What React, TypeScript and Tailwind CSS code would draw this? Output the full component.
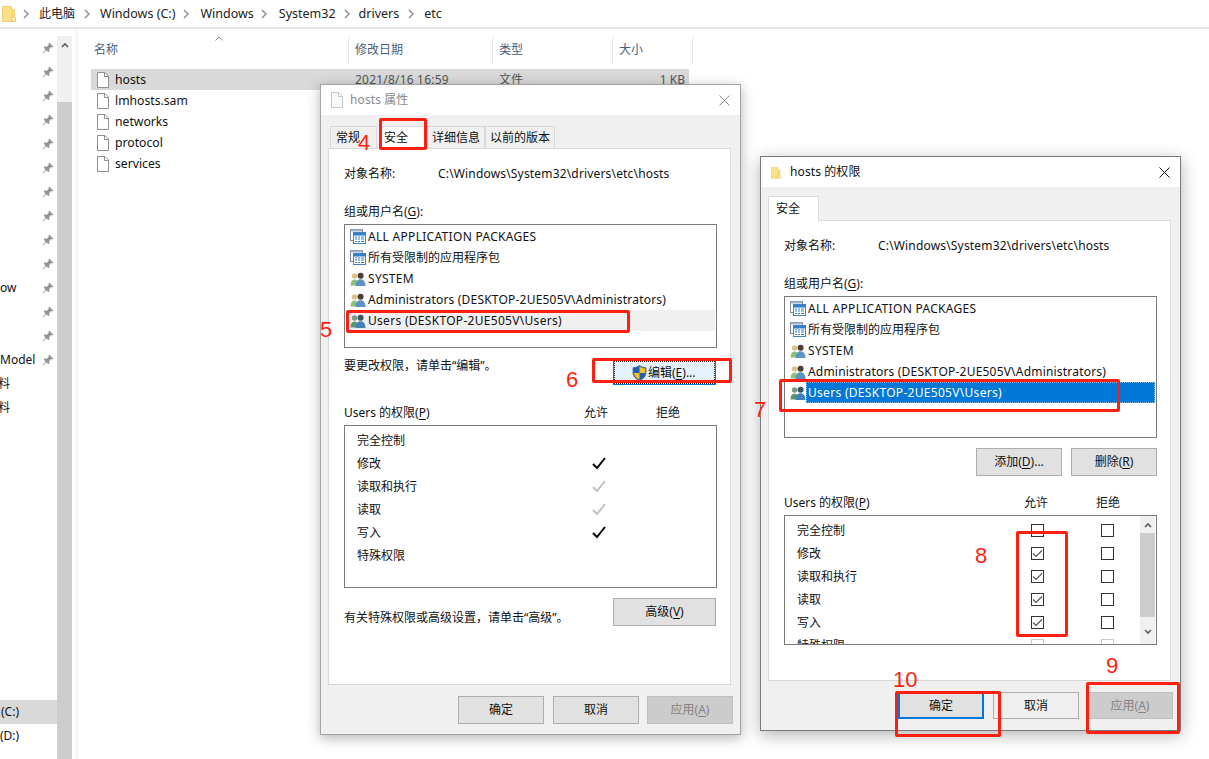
import React from "react";

const Chevron = () => (
  <svg width="6" height="10" viewBox="0 0 6 10" className="shrink-0">
    <path d="M1 1l4 4-4 4" fill="none" stroke="#8a8a8a" strokeWidth="1.4" />
  </svg>
);

const FolderIcon = ({ w = 14, h = 17 }: { w?: number; h?: number }) => (
  <svg width={w} height={h} viewBox="0 0 14 17" className="shrink-0">
    <path d="M0.5 1.5h8.5l1 2.5v12.5h-9.5z" fill="#fbe08c" stroke="#f2cf72" />
    <path d="M10 12.5h3.5v4h-3.5z" fill="#ffedb0" stroke="#f0c95f" />
    <path d="M10 4h3v9h-3z" fill="#f8d775" />
  </svg>
);

const FileIcon = ({ pale = false }: { pale?: boolean }) => (
  <svg width="12" height="16" viewBox="0 0 12 16" className="shrink-0">
    <path
      d="M0.5 0.5h7.5l3.5 3.5v11.5h-11z"
      fill={pale ? "#fafafa" : "#ffffff"}
      stroke={pale ? "#c9c9c9" : "#8f8f8f"}
    />
    <path d="M7.5 0.5v4h4" fill="none" stroke={pale ? "#c9c9c9" : "#8f8f8f"} />
  </svg>
);

const Pin = () => (
  <svg width="12" height="12" viewBox="0 0 12 12" className="shrink-0">
    <path d="M7.2 0.6l4.2 4.2-1.2 0.7-1-0.4-2 2 0.2 2.2-1 1-2-2L1 11.4l-0.4-0.4 3-3.4-2-2 1-1 2.2 0.2 2-2-0.3-1z" fill="#8d949b" />
  </svg>
);

const GroupIcon = ({ tint = false }: { tint?: boolean }) => (
  <svg width="16" height="16" viewBox="0 0 16 16" className="shrink-0">
    <circle cx="4.6" cy="5" r="2.8" fill={tint ? "#7f9a80" : "#d9c48c"} />
    <path d="M0.5 14.5c0-4 1.6-6 4-6s4 2 4 6z" fill={tint ? "#5f9468" : "#8fbf72"} />
    <circle cx="10.6" cy="4.8" r="3" fill={tint ? "#3c5566" : "#4b3f36"} />
    <path d="M5.5 15c0-4.4 2-6.8 5-6.8s5 2.4 5 6.8z" fill={tint ? "#3f82b8" : "#5d92c4"} />
  </svg>
);

const PackageIcon = () => (
  <svg width="16" height="15" viewBox="0 0 16 15" className="shrink-0">
    <rect x="0.5" y="0.5" width="12" height="11" fill="#ffffff" stroke="#7d8b9c" />
    <rect x="0.5" y="0.5" width="12" height="2" fill="#9fb4cc" />
    <rect x="3.5" y="3.5" width="12" height="11" fill="#ffffff" stroke="#4f7fb3" />
    <rect x="4" y="4" width="11" height="2.5" fill="#2f7fd0" />
    <path d="M5 8h2M8 8h2M11 8h3M5 10h2M8 10h2M11 10h3M5 12.5h2M8 12.5h2M11 12.5h3" stroke="#2f7fd0" strokeWidth="1.2" />
  </svg>
);

const Shield = () => (
  <svg width="15" height="16" viewBox="0 0 15 16" className="shrink-0">
    <path d="M7.5 0.5C5.5 2 3 2.6 1 2.6v5.2c0 3.6 3 6.4 6.5 7.7 3.5-1.3 6.5-4.1 6.5-7.7V2.6C12 2.6 9.5 2 7.5 0.5z" fill="#1f5fb8" stroke="#5c6d86" strokeWidth="0.8" />
    <path d="M7.5 1.4V8H1.8v-0.2V3.3C3.8 3.2 5.9 2.6 7.5 1.4z" fill="#1f5fb8" />
    <path d="M7.5 1.6c1.6 1.1 3.6 1.7 5.7 1.8V8H7.5z" fill="#f6c21c" />
    <path d="M1.9 8h5.6v6.6C4.8 13.5 2.2 11.2 1.9 8z" fill="#f6c21c" />
  </svg>
);

const CloseX = ({ color }: { color: string }) => (
  <svg width="11" height="11" viewBox="0 0 11 11" className="shrink-0">
    <path d="M0.5 0.5l10 10M10.5 0.5l-10 10" stroke={color} strokeWidth="1" />
  </svg>
);

const BigCheck = ({ color }: { color: string }) => (
  <svg width="14" height="13" viewBox="0 0 14 13" className="shrink-0">
    <path d="M1 7l4 4 8-10" fill="none" stroke={color} strokeWidth="2" />
  </svg>
);

const ScrollChevron = ({ down = false }: { down?: boolean }) => (
  <svg width="8" height="6" viewBox="0 0 8 6" className="shrink-0">
    <path d={down ? "M1 1l3 3 3-3" : "M1 5l3-3 3 3"} fill="none" stroke="#606060" strokeWidth="1.7" />
  </svg>
);

const CheckBox = ({ checked = false, faint = false }: { checked?: boolean; faint?: boolean }) => (
  <div
    className={`w-[13px] h-[13px] shrink-0 border flex items-center justify-center bg-white ${
      faint ? "border-[#cccccc]" : "border-[#333333]"
    }`}
  >
    {checked && (
      <svg width="11" height="9" viewBox="0 0 11 9">
        <path d="M1 4.5l3 3 6-6" fill="none" stroke="#555555" strokeWidth="1.2" />
      </svg>
    )}
  </div>
);

const BTN = "w-[86px] h-[28px] border border-[#adadad] bg-[#e1e1e1]";

const Button = ({ children, className = BTN }: { children: React.ReactNode; className?: string }) => (
  <div className={`flex items-center justify-center ${className}`}>{children}</div>
);

const U = ({ children }: { children: React.ReactNode }) => <span className="underline underline-offset-2">{children}</span>;

const PrincipalRows = ({ selected }: { selected: boolean }) => (
  <div className="flex flex-col pt-[1px] px-[1px]">
    {[
      { t: "ALL APPLICATION PACKAGES", icon: <PackageIcon />, c: "tracking-[0.3px]" },
      { t: "所有受限制的应用程序包", icon: <PackageIcon />, c: "" },
      { t: "SYSTEM", icon: <GroupIcon />, c: "tracking-[0.3px]" },
      { t: "Administrators (DESKTOP-2UE505V\\Administrators)", icon: <GroupIcon />, c: "tracking-[0.2px]" },
    ].map((r) => (
      <div key={r.t} className="h-[21px] flex items-center pl-[4px] gap-[2px]">
        {r.icon}
        <span className={r.c}>{r.t}</span>
      </div>
    ))}
    <div className={`h-[21px] flex items-center pl-[4px] ${selected ? "" : "bg-[#f0f0f0]"}`}>
      <GroupIcon tint />
      <span
        className={
          selected
            ? "flex-1 self-stretch flex items-center pl-[2px] tracking-[0.3px] bg-[#0078d7] text-white outline-1 outline-dotted outline-[#8ab8de] -outline-offset-1"
            : "pl-[2px] tracking-[0.3px]"
        }
      >
        Users (DESKTOP-2UE505V\Users)
      </span>
    </div>
  </div>
);

const PERMS = ["完全控制", "修改", "读取和执行", "读取", "写入", "特殊权限"];

const Dialog1Perms = () => {
  const marks: Record<number, string> = { 1: "#000000", 2: "#c2c2c2", 3: "#c2c2c2", 4: "#000000" };
  return (
    <div className="h-[163px] border border-[#7a7a7a] pt-[3px] pl-[12px] flex flex-col shrink-0">
      {PERMS.map((p, i) => (
        <div key={p} className="h-[23px] flex items-center shrink-0">
          <span className="w-[235px]">{p}</span>
          {marks[i] && <BigCheck color={marks[i]} />}
        </div>
      ))}
    </div>
  );
};

const Dialog2Perms = () => (
  <div className="h-[130px] border border-[#7a7a7a] flex overflow-hidden shrink-0">
    <div className="flex-1 pt-[3px] pl-[12px] flex flex-col">
      {PERMS.map((p, i) => (
        <div key={p} className="h-[23px] flex items-center shrink-0">
          <span className="w-[234px]">{p}</span>
          <CheckBox checked={i >= 1 && i <= 4} faint={i === 5} />
          <div className="w-[57px]" />
          <CheckBox faint={i === 5} />
        </div>
      ))}
    </div>
    <div className="w-[15px] mr-[1px] bg-[#f0f0f0] flex flex-col items-center shrink-0">
      <div className="h-[17px] flex items-center justify-center"><ScrollChevron /></div>
      <div className="w-full h-[84px] bg-[#cdcdcd]" />
      <div className="flex-1 flex items-center justify-center pt-[3px]"><ScrollChevron down /></div>
    </div>
  </div>
);

const PermHeader = () => (
  <div className="flex h-[20px] items-center">
    <span className="w-[240px]">
      Users 的权限(<U>P</U>)
    </span>
    <span className="w-[72px]">允许</span>
    <span>拒绝</span>
  </div>
);

const ObjectName = () => (
  <div className="flex h-[20px] items-center mt-[15px]">
    <span className="w-[94px]">对象名称:</span>
    <span className="tracking-[0.17px]">C:\Windows\System32\drivers\etc\hosts</span>
  </div>
);

const GroupLabel = () => (
  <div className="h-[20px] flex items-center mt-[18px]">
    组或用户名(<U>G</U>):
  </div>
);

const Footer = ({ focusStyle, cancelStyle, applyStyle }: { focusStyle: string; cancelStyle: string; applyStyle: string }) => (
  <div className="flex justify-end items-end mt-[11px] pr-[7px]">
    <Button className={focusStyle}>确定</Button>
    <Button className={`ml-[9px] ${cancelStyle}`}>取消</Button>
    <Button className={`ml-[8px] ${applyStyle}`}>
      <span>应用(<U>A</U>)</span>
    </Button>
  </div>
);

const Files = ["lmhosts.sam", "networks", "protocol", "services"];

const SideRow = ({ text, pin = true, className = "" }: { text?: string; pin?: boolean; className?: string }) => (
  <div className="h-[24px] flex items-center justify-between pr-[3px] shrink-0 overflow-hidden">
    <span className={className}>{text}</span>
    {pin && <Pin />}
  </div>
);

const RED_DIGIT = "absolute text-[22px] leading-[26px] text-[#ff1f12] font-['Liberation_Sans',sans-serif]";
const RED_BOX = "absolute border-[3px] border-[#ff1f12] rounded-[2px]";

export default function App() {
  const sideRows: (string | undefined)[] = [
    undefined, undefined, undefined, undefined, undefined, undefined, undefined, undefined, undefined, undefined,
    "ow", undefined, undefined, "Model",
  ];
  return (
    <div className="relative w-[1209px] h-[759px] overflow-hidden bg-white text-[12px] leading-[18px] text-[#111111] font-['Noto_Sans','Noto_Sans_CJK_SC',sans-serif] flex flex-col">
      {/* breadcrumb */}
      <div className="h-[29px] border-b-2 border-[#e5e5e5] flex items-center pl-[2px] shrink-0 text-[#222222] text-[12.5px]">
        <FolderIcon />
        <div className="ml-[7px]"><Chevron /></div>
        <span className="ml-[10px] text-[12px]">此电脑</span>
        <div className="ml-[9px]"><Chevron /></div>
        <span className="ml-[10px]">Windows (C:)</span>
        <div className="ml-[8px]"><Chevron /></div>
        <span className="ml-[11px]">Windows</span>
        <div className="ml-[7px]"><Chevron /></div>
        <span className="ml-[12px]">System32</span>
        <div className="ml-[8px]"><Chevron /></div>
        <span className="ml-[9px]">drivers</span>
        <div className="ml-[9px]"><Chevron /></div>
        <span className="ml-[10px]">etc</span>
      </div>

      <div className="flex-1 flex min-h-0">
        {/* sidebar */}
        <div className="w-[57px] shrink-0 flex flex-col pt-[7px] pb-[12px] text-[12px]">
          {sideRows.map((t, i) => (
            <SideRow key={i} text={t} />
          ))}
          <SideRow text="料" pin={false} className="-ml-[2px]" />
          <div className="h-[23px] flex items-center overflow-hidden shrink-0">
            <span className="-ml-[2px]">料</span>
          </div>
          <div className="mt-auto h-[24px] bg-[#d9d9d9] flex items-center pl-[1px] -mr-[1px]">(C:)</div>
          <div className="h-[23px] flex items-center">(D:)</div>
        </div>
        {/* sidebar scrollbar */}
        <div className="w-[15px] shrink-0 mt-[7px] bg-[#f0f0f0] flex flex-col">
          <div className="h-[66px] pt-[6px] flex justify-center">
            <ScrollChevron />
          </div>
          <div className="flex-1 bg-[#cdcdcd]" />
        </div>
        <div className="w-[3px] ml-[3px] bg-[#f7f7f7] shrink-0" />

        {/* file list */}
        <div className="flex-1 flex flex-col pl-[13px] pt-[8px] text-[12.2px]">
          <div className="relative h-[27px] flex text-[#4c607a] text-[12px]">
            <div className="w-[258px] pl-[3px] pb-[1px] flex items-center border-r border-[#e5e5e5] relative">
              名称
              <svg width="8" height="5" viewBox="0 0 8 5" className="absolute left-[124px] -top-[1px]">
                <path d="M0.5 4.5L4 1l3.5 3.5" fill="none" stroke="#8a8a8a" />
              </svg>
            </div>
            <div className="w-[144px] pl-[6px] pb-[1px] flex items-center border-r border-[#e5e5e5]">修改日期</div>
            <div className="w-[120px] pl-[6px] pb-[1px] flex items-center border-r border-[#e5e5e5]">类型</div>
            <div className="w-[80px] pl-[6px] pb-[1px] flex items-center border-r border-[#e5e5e5]">大小</div>
          </div>
          <div className="mt-[5px] w-[598px] h-[21px] bg-[#d9d9d9] flex items-center pl-[6px]">
            <FileIcon />
            <span className="ml-[6px] w-[240px]">hosts</span>
            <span className="w-[144px] text-[#555555] text-[12px] tracking-[0.2px]">2021/8/16 16:59</span>
            <span className="w-[120px] text-[#555555] text-[12px]">文件</span>
            <span className="w-[66px] text-right text-[#555555] text-[12px]">1 KB</span>
          </div>
          {Files.map((f) => (
            <div key={f} className="h-[21px] flex items-center pl-[6px]">
              <FileIcon />
              <span className="ml-[6px]">{f}</span>
            </div>
          ))}
        </div>
      </div>

      {/* properties dialog */}
      <div className="absolute left-[320px] top-[84px] w-[421px] h-[651px] border border-[#a3a3a3] bg-[#f0f0f0] shadow-[0_3px_12px_rgba(0,0,0,0.3)] flex flex-col">
        <div className="h-[30px] bg-white flex items-center pl-[10px] pr-[10px] shrink-0 text-[#8a8a8a]">
          <FileIcon pale />
          <span className="ml-[7px] tracking-[0.1px]">hosts 属性</span>
          <div className="ml-auto"><CloseX color="#8a8a8a" /></div>
        </div>
        <div className="flex pt-[11px] pl-[9px] pr-[7px] shrink-0">
          <div className="w-[47px] h-[22px] mr-[3px] border border-b-0 border-[#d9d9d9] flex items-center pl-[5px]">常规</div>
          <div className="w-[47px] h-[23px] -mb-[1px] relative bg-white border border-b-0 border-[#d9d9d9] flex items-center pl-[3px]">安全</div>
          <div className="w-[58px] h-[22px] border border-b-0 border-[#d9d9d9] flex items-center justify-center">详细信息</div>
          <div className="w-[70px] h-[22px] border border-b-0 border-[#d9d9d9] flex items-center justify-center">以前的版本</div>
        </div>
        <div className="mx-[7px] w-[403px] h-[537px] bg-white border border-[#d9d9d9] pl-[15px] pr-[13px] flex flex-col shrink-0">
          <ObjectName />
          <GroupLabel />
          <div className="h-[124px] mt-[2px] border border-[#7a7a7a] shrink-0">
            <PrincipalRows selected={false} />
          </div>
          <div className="flex justify-between mt-[8px] shrink-0">
            <span className="mt-[1px]">要更改权限，请单击“编辑”。</span>
            <div className="mt-[4px] mr-[1px] w-[103px] h-[25px] bg-[#e5f1fb] border border-[#0078d7] flex items-center pl-[18px] gap-[1px] outline-1 outline-dotted outline-[#222222] -outline-offset-2">
              <Shield />
              <span>编辑(<U>E</U>)...</span>
            </div>
          </div>
          <div className="mt-[18px]"><PermHeader /></div>
          <div className="mt-[2px]"><Dialog1Perms /></div>
          <div className="flex justify-between mt-[10px] shrink-0">
            <span className="mt-[11px]">有关特殊权限或高级设置，请单击“高级”。</span>
            <Button className="w-[103px] h-[28px] mr-[1px] border border-[#adadad] bg-[#e1e1e1]">
              <span>高级(<U>V</U>)</span>
            </Button>
          </div>
        </div>
        <Footer
          focusStyle={BTN}
          cancelStyle={BTN}
          applyStyle="w-[86px] h-[28px] border border-[#bfbfbf] bg-[#cccccc] text-[#838383]"
        />
      </div>

      {/* permissions dialog */}
      <div className="absolute left-[760px] top-[156px] w-[421px] h-[575px] border border-[#7a7a7a] bg-[#f0f0f0] shadow-[0_4px_16px_rgba(0,0,0,0.3)] flex flex-col">
        <div className="h-[30px] bg-white flex items-center pl-[10px] pr-[10px] shrink-0">
          <FolderIcon w={10} h={13} />
          <span className="ml-[9px] tracking-[0.1px]">hosts 的权限</span>
          <div className="ml-auto"><CloseX color="#111111" /></div>
        </div>
        <div className="flex pl-[7px] pt-[9px] shrink-0">
          <div className="w-[51px] h-[25px] -mb-[1px] relative bg-white border border-b-0 border-[#d9d9d9] flex items-center pl-[7px]">安全</div>
        </div>
        <div className="mx-[7px] w-[403px] h-[461px] bg-white border border-[#d9d9d9] pl-[15px] pr-[13px] flex flex-col shrink-0">
          <ObjectName />
          <GroupLabel />
          <div className="h-[142px] mt-[2px] border border-[#7a7a7a] shrink-0">
            <PrincipalRows selected />
          </div>
          <div className="flex justify-end mt-[10px] shrink-0">
            <Button>
              <span>添加(<U>D</U>)...</span>
            </Button>
            <Button className={`ml-[9px] ${BTN}`}>
              <span>删除(<U>R</U>)</span>
            </Button>
          </div>
          <div className="mt-[17px]"><PermHeader /></div>
          <div className="mt-[2px]"><Dialog2Perms /></div>
        </div>
        <Footer
          focusStyle="w-[86px] h-[27px] border-2 border-[#0078d7] bg-[#e1e1e1]"
          cancelStyle="w-[86px] h-[27px] border border-[#adadad] bg-[#efefef]"
          applyStyle="w-[86px] h-[27px] border border-[#bfbfbf] bg-[#cccccc] text-[#838383]"
        />
      </div>

      {/* red annotations */}
      <div className={`${RED_BOX} left-[379px] top-[118px] w-[48px] h-[32px]`} />
      <div className={`${RED_BOX} left-[346px] top-[310px] w-[284px] h-[23px]`} />
      <div className={`${RED_BOX} left-[592px] top-[358px] w-[140px] h-[25px]`} />
      <div className={`${RED_BOX} left-[779px] top-[379px] w-[341px] h-[33px]`} />
      <div className={`${RED_BOX} left-[1016px] top-[531px] w-[52px] h-[106px]`} />
      <div className={`${RED_BOX} left-[1086px] top-[682px] w-[94px] h-[52px]`} />
      <div className={`${RED_BOX} left-[895px] top-[691px] w-[106px] h-[46px]`} />

      <span className={`${RED_DIGIT} left-[358px] top-[130px]`}>4</span>
      <span className={`${RED_DIGIT} left-[320px] top-[317px]`}>5</span>
      <span className={`${RED_DIGIT} left-[566px] top-[367px]`}>6</span>
      <span className={`${RED_DIGIT} left-[754px] top-[397px]`}>7</span>
      <span className={`${RED_DIGIT} left-[975px] top-[543px]`}>8</span>
      <span className={`${RED_DIGIT} left-[1106px] top-[653px]`}>9</span>
      <span className={`${RED_DIGIT} left-[893px] top-[667px]`}>10</span>
    </div>
  );
}
